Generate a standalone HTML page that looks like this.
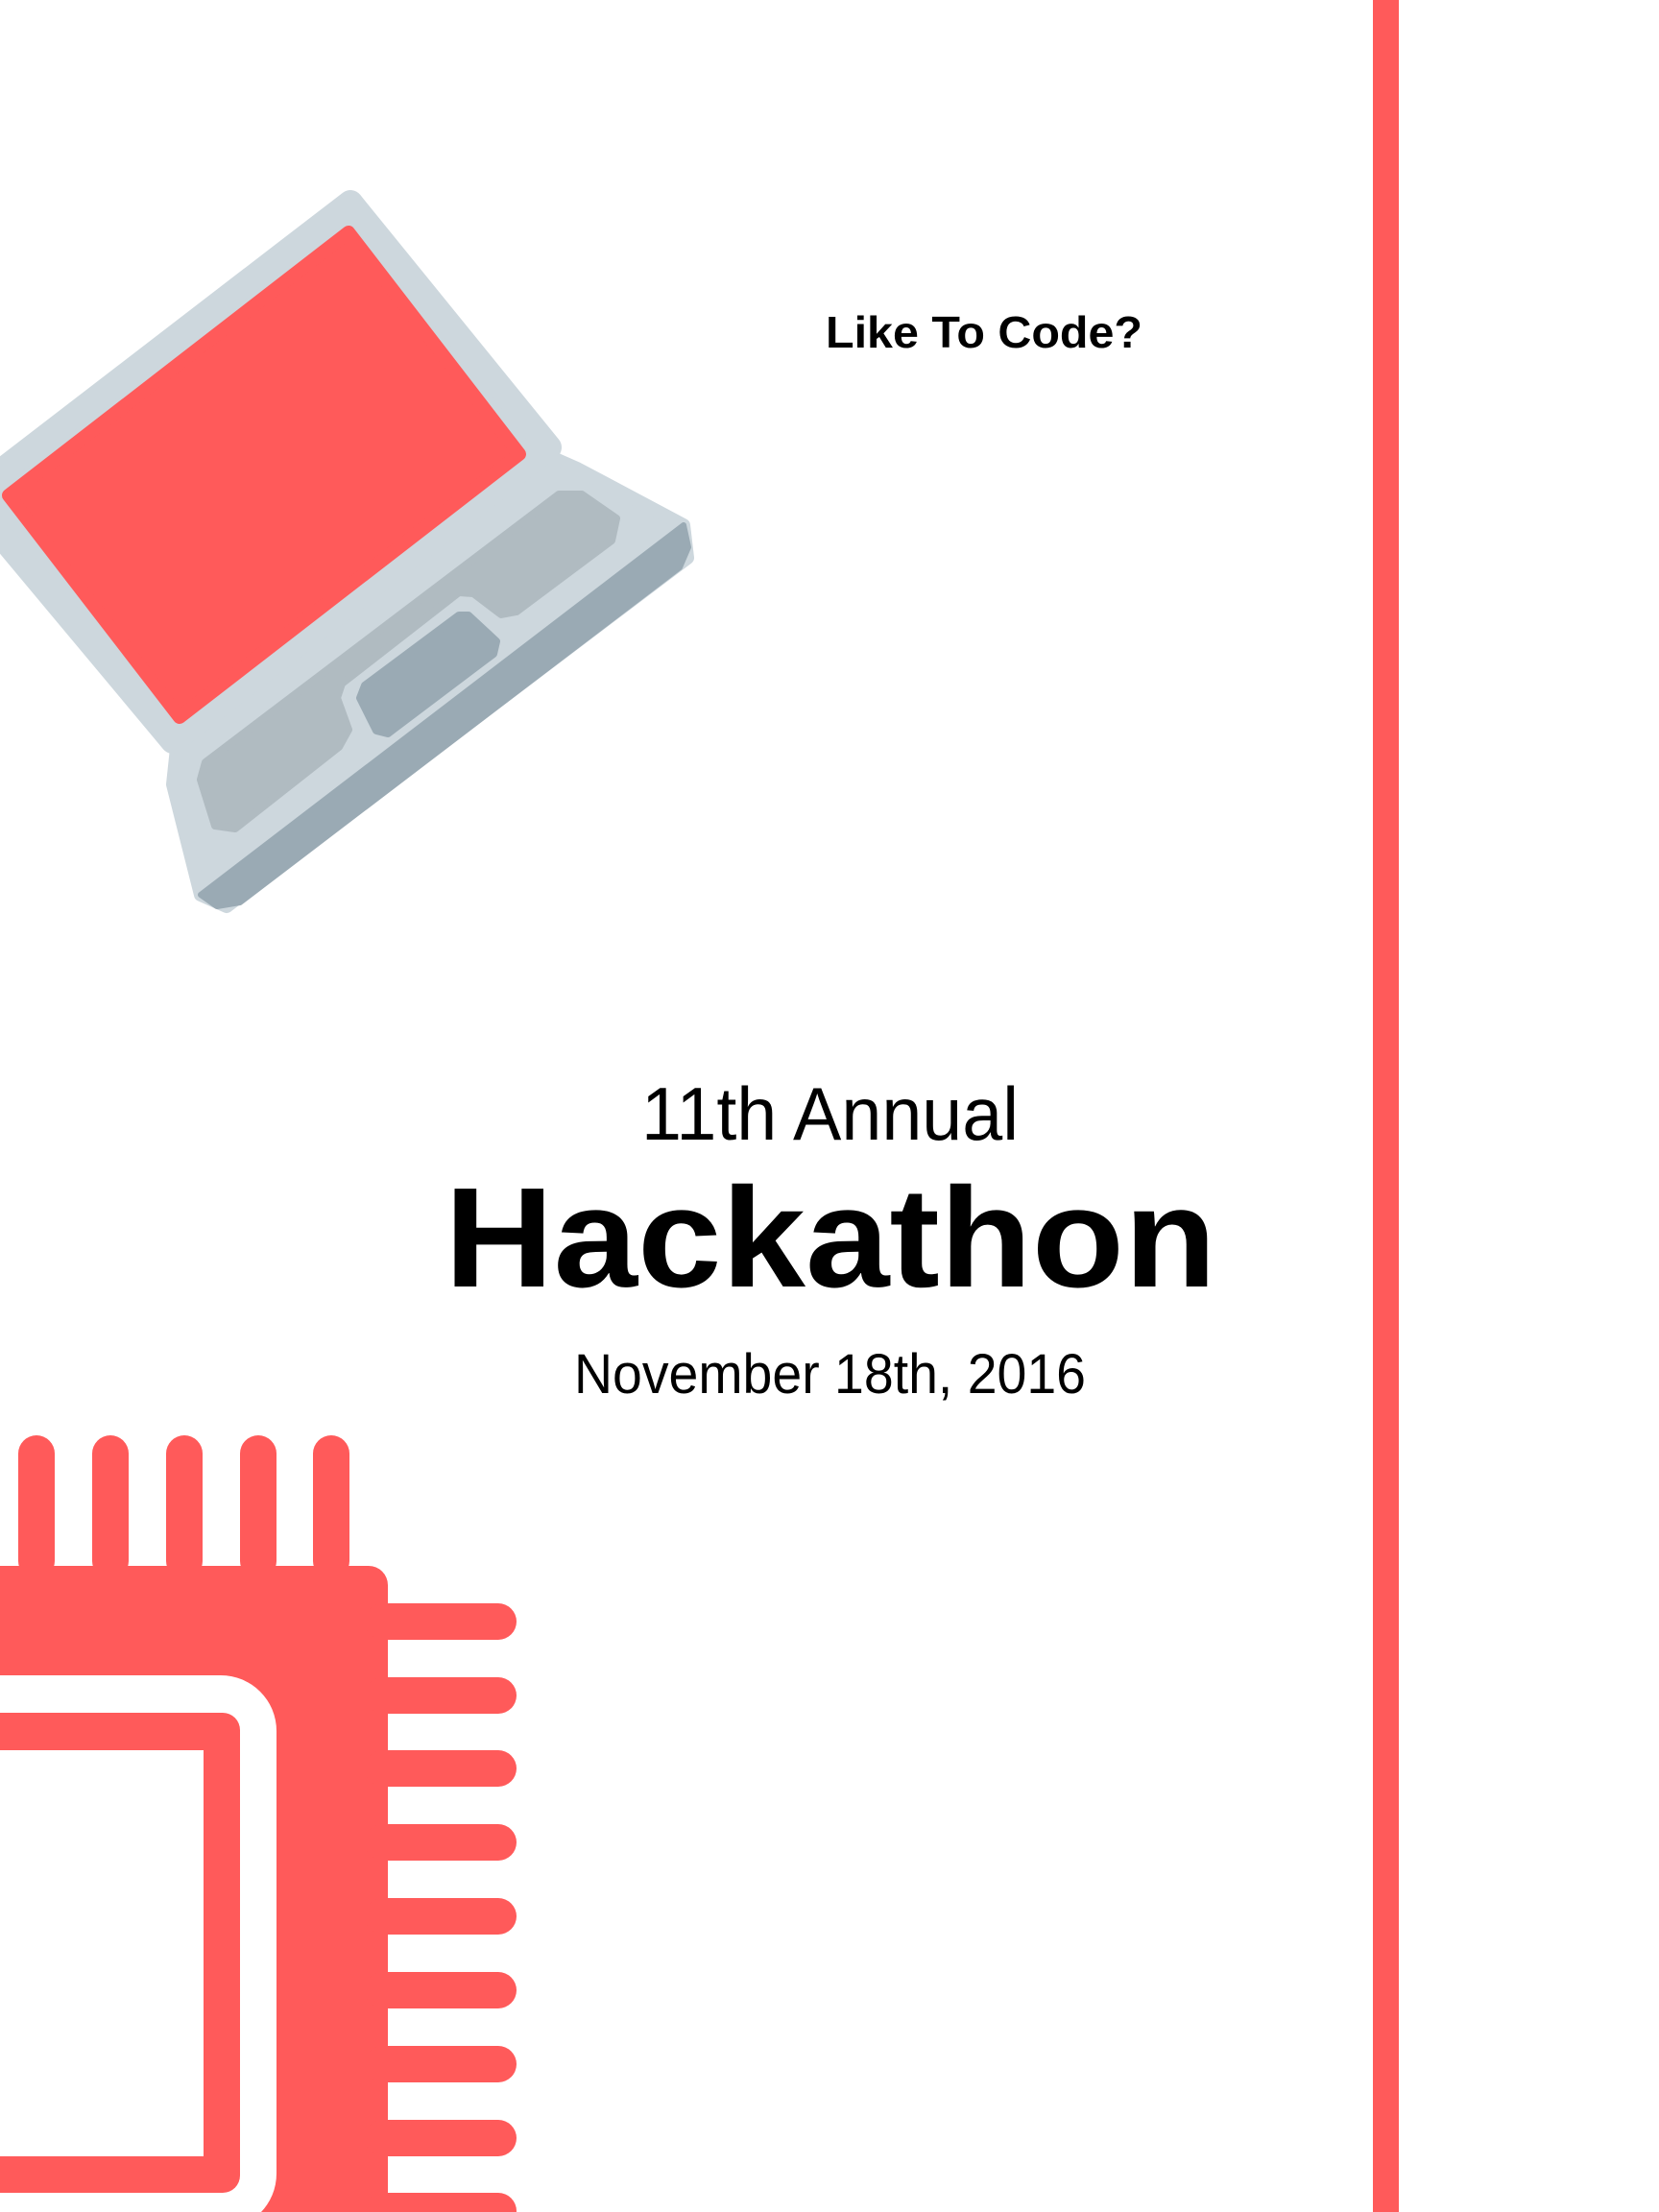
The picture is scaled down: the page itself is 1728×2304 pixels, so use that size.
<!DOCTYPE html>
<html><head><meta charset="utf-8"><style>
html,body{margin:0;padding:0;background:#fff;}
body{width:1728px;height:2304px;overflow:hidden;position:relative;}
svg{position:absolute;left:0;top:0;}
</style></head><body>
<svg width="1728" height="2304" viewBox="0 0 1728 2304" xmlns="http://www.w3.org/2000/svg">
<rect x="1430" y="0" width="27" height="2304" fill="#ff5a5a"/>
<g stroke-linejoin="round">
<polygon points="560,470 601,488 712,547 716,581 236,944 209,932 180,817 185,770" fill="#cdd7dd" stroke="#cdd7dd" stroke-width="14"/>
<polygon points="712,547 717,570 708,591 250,940 226,944 209,932" fill="#9aaab4" stroke="#9aaab4" stroke-width="6"/>
<polygon points="582,515 606,515 642,540 637,563 538,637 522,640 493,618 478,617 356,712 351,727 363,760 353,778 245,863 224,860 209,812 214,794" fill="#b0bbc1" stroke="#b0bbc1" stroke-width="8"/>
<polygon points="478,641 488,641 517,668 514,681 404,764 392,761 375,727 380,714" fill="#9aaab4" stroke="#9aaab4" stroke-width="8"/>
<polygon points="365,211 572,466 180,772 -33,517" fill="#cdd7dd" stroke="#cdd7dd" stroke-width="26"/>
<polygon points="363,242 541,473 187,747 9,516" fill="#ff5a5a" stroke="#ff5a5a" stroke-width="14"/>
</g>
<g fill="#ff5a5a">
<rect x="19" y="1495" width="38" height="150" rx="19"/>
<rect x="96" y="1495" width="38" height="150" rx="19"/>
<rect x="173" y="1495" width="38" height="150" rx="19"/>
<rect x="250" y="1495" width="38" height="150" rx="19"/>
<rect x="326" y="1495" width="38" height="150" rx="19"/>
<rect x="-40" y="1631" width="444" height="720" rx="20"/>
<rect x="380" y="1670" width="158" height="38" rx="19"/>
<rect x="380" y="1747" width="158" height="38" rx="19"/>
<rect x="380" y="1823" width="158" height="38" rx="19"/>
<rect x="380" y="1900" width="158" height="38" rx="19"/>
<rect x="380" y="1977" width="158" height="38" rx="19"/>
<rect x="380" y="2054" width="158" height="38" rx="19"/>
<rect x="380" y="2131" width="158" height="38" rx="19"/>
<rect x="380" y="2208" width="158" height="38" rx="19"/>
<rect x="380" y="2284" width="158" height="38" rx="19"/>
</g>
<rect x="-60" y="1745" width="348" height="577" rx="58" fill="#fff"/>
<rect x="-60" y="1784" width="310" height="500" rx="18" fill="#ff5a5a"/>
<rect x="-60" y="1823" width="272" height="423" fill="#fff"/>
<g font-family="Liberation Sans, DejaVu Sans, sans-serif" fill="#000">
<text x="860" y="362" font-size="46" font-weight="bold" textLength="330" lengthAdjust="spacingAndGlyphs">Like To Code?</text>
<text x="668" y="1187" font-size="78" textLength="393" lengthAdjust="spacingAndGlyphs">11th Annual</text>
<text x="463" y="1340" font-size="148" font-weight="bold" textLength="804" lengthAdjust="spacingAndGlyphs">Hackathon</text>
<text x="598" y="1451" font-size="58" textLength="533" lengthAdjust="spacingAndGlyphs">November 18th, 2016</text>
</g>
</svg>
</body></html>
